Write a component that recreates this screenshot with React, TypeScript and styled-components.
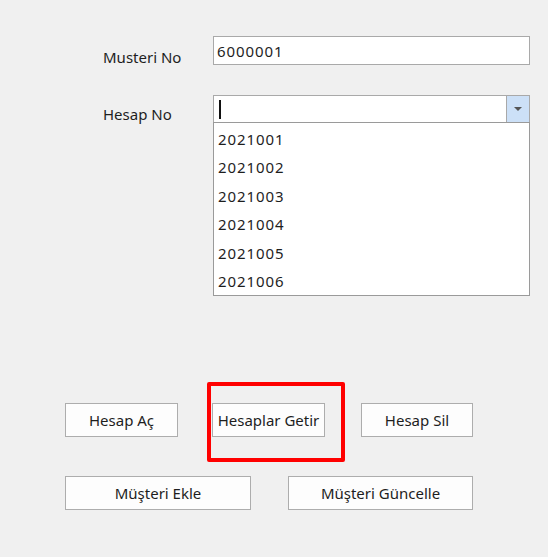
import React from "react";
import styled, { createGlobalStyle } from "styled-components";

const Global = createGlobalStyle`
  html, body { margin: 0; padding: 0; }
  body {
    background: #f0f0f0;
    font-family: "Noto Sans", "Liberation Sans", sans-serif;
    color: #1e1e1e;
  }
`;

const Window = styled.div`
  width: 548px;
  height: 557px;
  box-sizing: border-box;
  padding-top: 36px;
  display: flex;
  flex-direction: column;
  font-size: 15px;
`;

const Form = styled.div`
  display: flex;
  flex-direction: column;
  gap: 30px;
  padding-left: 103px;
`;

const FieldRow = styled.div<{ $h: number }>`
  display: flex;
  align-items: flex-start;
  height: ${(p) => p.$h}px;
`;

const Label = styled.div<{ $offset: number }>`
  width: 110px;
  padding-top: ${(p) => p.$offset}px;
  line-height: 18px;
`;

const Digits = styled.span`
  letter-spacing: 0.9px;
`;

const TextBox = styled.div`
  width: 317px;
  height: 29px;
  box-sizing: border-box;
  border: 1px solid #a9a9a9;
  background: #fff;
  padding-left: 3px;
  display: flex;
  align-items: center;
`;

const ComboWrap = styled.div`
  position: relative;
  width: 317px;
  height: 28px;
`;

const Combo = styled.div`
  height: 28px;
  box-sizing: border-box;
  border: 1px solid #a9a9a9;
  background: #fff;
  display: flex;
`;

const ComboInput = styled.div`
  flex: 1;
  display: flex;
  align-items: center;
  padding-left: 5px;
`;

const Caret = styled.span`
  width: 2px;
  height: 19px;
  background: #111;
`;

const ComboButton = styled.div`
  width: 22px;
  border-left: 1px solid #a9a9a9;
  background: #cce0f7;
  display: flex;
  align-items: center;
  justify-content: center;
`;

const DropList = styled.div`
  position: absolute;
  left: 0;
  top: 27px;
  width: 317px;
  box-sizing: border-box;
  border: 1px solid #9a9a9a;
  background: #fff;
  padding-top: 2px;
  z-index: 2;
`;

const DropItem = styled.div`
  height: 28.4px;
  line-height: 28.4px;
  padding-left: 4px;
`;

const Buttons = styled.div`
  margin-top: 280px;
  display: flex;
  flex-direction: column;
  gap: 39px;
  padding-left: 65px;
`;

const ButtonRow = styled.div`
  display: flex;
  align-items: flex-start;
`;

const Button = styled.button<{ $w: number; $ml?: number }>`
  position: relative;
  width: ${(p) => p.$w}px;
  height: 34px;
  margin-left: ${(p) => p.$ml ?? 0}px;
  box-sizing: border-box;
  border: 1px solid #adadad;
  background: #fdfdfd;
  font: inherit;
  color: #1e1e1e;
  padding: 0;
  border-radius: 0;
`;

const Highlight = styled.span`
  position: absolute;
  left: -6px;
  top: -22px;
  width: 138px;
  height: 80px;
  box-sizing: border-box;
  border: 4px solid #ff0000;
  border-radius: 2px;
  pointer-events: none;
`;

const items = ["2021001", "2021002", "2021003", "2021004", "2021005", "2021006"];

export default function App() {
  return (
    <>
      <Global />
      <Window>
        <Form>
          <FieldRow $h={29}>
            <Label $offset={12}>Musteri No</Label>
            <TextBox>
              <Digits>6000001</Digits>
            </TextBox>
          </FieldRow>
          <FieldRow $h={28}>
            <Label $offset={10}>Hesap No</Label>
            <ComboWrap>
              <Combo>
                <ComboInput>
                  <Caret />
                </ComboInput>
                <ComboButton>
                  <svg width="8" height="4" viewBox="0 0 8 4">
                    <path d="M0 0H8L4 4Z" fill="#555" />
                  </svg>
                </ComboButton>
              </Combo>
              <DropList>
                {items.map((i) => (
                  <DropItem key={i}>
                    <Digits>{i}</Digits>
                  </DropItem>
                ))}
              </DropList>
            </ComboWrap>
          </FieldRow>
        </Form>
        <Buttons>
          <ButtonRow>
            <Button $w={113}>Hesap Aç</Button>
            <Button $w={113} $ml={34}>
              Hesaplar Getir
              <Highlight />
            </Button>
            <Button $w={112} $ml={36}>Hesap Sil</Button>
          </ButtonRow>
          <ButtonRow>
            <Button $w={186}>Müşteri Ekle</Button>
            <Button $w={185} $ml={37}>Müşteri Güncelle</Button>
          </ButtonRow>
        </Buttons>
      </Window>
    </>
  );
}
